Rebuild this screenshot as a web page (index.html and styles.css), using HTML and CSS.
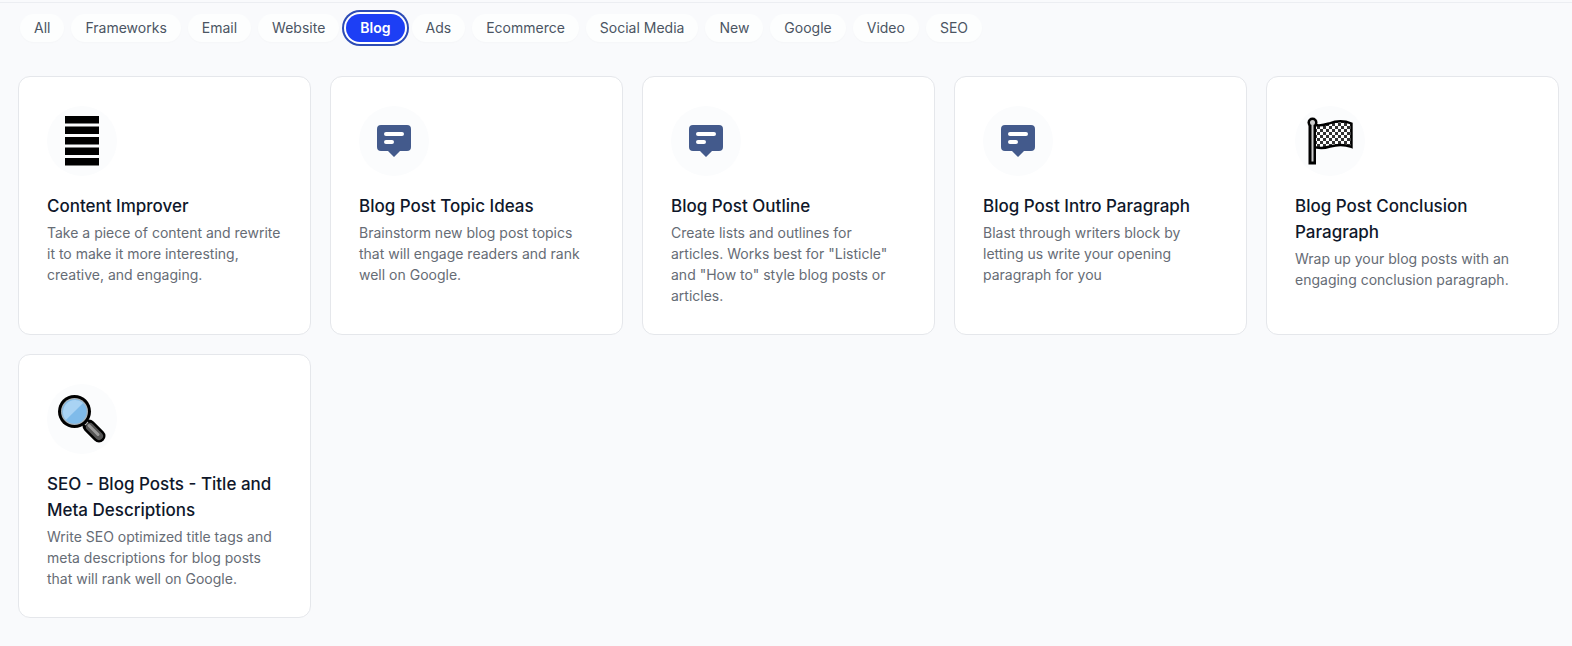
FILE: index.html
```html
<!DOCTYPE html>
<html lang="en">
<head>
    <meta charset="UTF-8">
    <meta name="viewport" content="width=device-width, initial-scale=1.0">
    <title>Templates</title>
    <link rel="stylesheet" href="styles.css">
</head>
<body>
    <!-- shared icon shapes -->
    <svg class="sprite" aria-hidden="true">
        <symbol id="icon-post" viewBox="0 0 34 32">
            <path fill="#435a8c" d="M4 0h26a4 4 0 0 1 4 4v18a4 4 0 0 1-4 4h-7l-6 6-6-6H4a4 4 0 0 1-4-4V4a4 4 0 0 1 4-4z"/>
            <path stroke="#fff" stroke-width="4" stroke-linecap="round" d="M9 9h16M9 17h6"/>
        </symbol>
    </svg>

    <main class="page">
        <nav class="filters">
            <button class="filter" type="button">All</button>
            <button class="filter" type="button">Frameworks</button>
            <button class="filter" type="button">Email</button>
            <button class="filter" type="button">Website</button>
            <button class="filter active" type="button">Blog</button>
            <button class="filter" type="button">Ads</button>
            <button class="filter" type="button">Ecommerce</button>
            <button class="filter" type="button">Social Media</button>
            <button class="filter" type="button">New</button>
            <button class="filter" type="button">Google</button>
            <button class="filter" type="button">Video</button>
            <button class="filter" type="button">SEO</button>
        </nav>

        <div class="cards">
            <div class="card">
                <div class="icon">
                    <svg width="34" height="50" viewBox="0 0 34 50">
                        <path d="M0 0h34v7.500H0zM0 10.500h34v7.500H0zM0 21h34v7.500H0zM0 31.500h34v7.500H0zM0 42h34v7.500H0z"/>
                    </svg>
                </div>
                <h3>Content Improver</h3>
                <p>Take a piece of content and rewrite it to make it more interesting, creative, and engaging.</p>
            </div>
            <div class="card">
                <div class="icon">
                    <svg width="34" height="32"><use href="#icon-post"/></svg>
                </div>
                <h3>Blog Post Topic Ideas</h3>
                <p>Brainstorm new blog post topics that will engage readers and rank well on Google.</p>
            </div>
            <div class="card">
                <div class="icon">
                    <svg width="34" height="32"><use href="#icon-post"/></svg>
                </div>
                <h3>Blog Post Outline</h3>
                <p>Create lists and outlines for articles. Works best for "Listicle" and "How to" style blog posts or articles.</p>
            </div>
            <div class="card">
                <div class="icon">
                    <svg width="34" height="32"><use href="#icon-post"/></svg>
                </div>
                <h3>Blog Post Intro Paragraph</h3>
                <p>Blast through writers block by letting us write your opening paragraph for you</p>
            </div>
            <div class="card">
                <div class="icon">
                    <svg width="48" height="48" viewBox="-2 0 48 48">
                        <defs>
                            <pattern id="checks" width="6" height="6" patternUnits="userSpaceOnUse">
                                <path fill="#fff" d="M0 0h6v6H0z"/>
                                <path fill="#333" d="M0 0h3v3H0zM3 3h3v3H3z"/>
                            </pattern>
                        </defs>
                        <path fill="url(#checks)" stroke="#000" stroke-width="2.400" d="M5 7.500C10 9 15 8.500 21 6.500C29 3.500 36 3.500 43.500 6.500V30C36 27 29 27.500 22 29.500C16 31.500 10 31.500 5 29.500z"/>
                        <path d="M.5 8H8v39.500H.5z"/>
                        <circle cx="4.500" cy="5.500" r="5"/>
                        <circle cx="4.500" cy="5.500" r="2.500" fill="#ccc"/>
                        <path fill="#ccc" d="M3.500 7h2v37.500h-2z"/>
                    </svg>
                </div>
                <h3>Blog Post Conclusion Paragraph</h3>
                <p>Wrap up your blog posts with an engaging conclusion paragraph.</p>
            </div>
            <div class="card">
                <div class="icon">
                    <svg width="48" height="48" viewBox="0 0 48 48">
                        <path stroke="#000" stroke-width="13" stroke-linecap="round" d="M31 31L41 41"/>
                        <path stroke="#000" stroke-width="8" d="M25 25l8 8"/>
                        <path stroke="#555" stroke-width="8" stroke-linecap="round" d="M32 32L41 41"/>
                        <path stroke="#999" stroke-width="3" stroke-linecap="round" d="M31 30.500L40 39.500"/>
                        <path stroke="#bbb" stroke-width="4" d="M25 25l4 4"/>
                        <circle cx="16.500" cy="16.500" r="16.500"/>
                        <circle cx="16.500" cy="16.500" r="13.500" fill="#a9b4bb"/>
                        <circle cx="16.500" cy="16.500" r="12.200" fill="#7fbbea"/>
                        <path fill="#a9d3f4" d="M7.900 25.100A12.200 12.200 0 0 1 25.100 7.900z"/>
                    </svg>
                </div>
                <h3>SEO - Blog Posts - Title and Meta Descriptions</h3>
                <p>Write SEO optimized title tags and meta descriptions for blog posts that will rank well on Google.</p>
            </div>
        </div>
    </main>
</body>
</html>
```
FILE: styles.css
```css
body {
    margin: 0;
    padding-top: 2px;
    font-family: Inter, "Liberation Sans", sans-serif;
    background-color: #f9fafc;
    color: #0f172a;
}

.sprite {
    position: absolute;
    width: 0;
    height: 0;
}

.page {
    border-top: 1px solid #eceef2;
    padding: 11px 13px 28px 18px;
}

.filters {
    display: flex;
    flex-wrap: wrap;
    gap: 7px;
    padding: 0 2px;
    margin-bottom: 34px;
}

.filter {
    border: none;
    border-radius: 14px;
    padding: 4px 14px;
    background-color: #fdfefe;
    color: #4b5563;
    font-family: inherit;
    font-size: 14px;
    line-height: 20px;
    box-shadow: 0 1px 2px rgba(0, 0, 0, 0.02);
    cursor: pointer;
}

.filter.active {
    background-color: #1d3ff5;
    color: #fff;
    font-weight: 600;
    box-shadow: 0 0 0 2px #fff, 0 0 0 4px #2c4bb5;
}

.cards {
    display: grid;
    grid-template-columns: repeat(5, 1fr);
    gap: 19px;
}

.card {
    background-color: #fff;
    border: 1px solid #e5e7eb;
    border-radius: 12px;
    padding: 28px;
}

.icon {
    display: flex;
    justify-content: center;
    align-items: center;
    width: 70px;
    height: 70px;
    margin: 1px 0 17px;
    border-radius: 50%;
    background-color: #fbfcfd;
}

.card h3 {
    margin: 0 0 3px;
    font-size: 17px;
    line-height: 26px;
    font-weight: 500;
}

.card p {
    margin: 0;
    color: #666c75;
    font-size: 14px;
    line-height: 21px;
}
```
